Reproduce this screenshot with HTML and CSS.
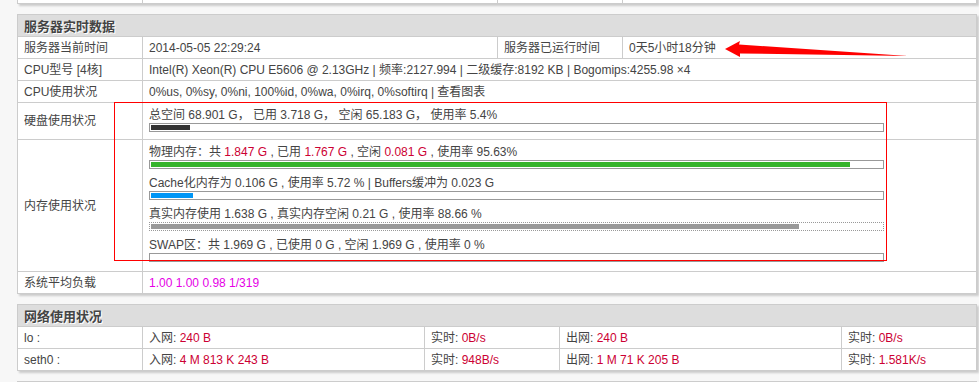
FILE: index.html
```html
<!DOCTYPE html>
<html>
<head>
    <meta charset="utf-8">
    <title>服务器实时数据</title>
    <link rel="stylesheet" href="styles.css">
</head>
<body>
    <div class="page">
        <!-- tail of the previous block -->
        <table class="info stub-top">
            <colgroup>
                <col class="c-label"><col class="c-value"><col class="c-label"><col>
            </colgroup>
            <tr>
                <td>&nbsp;</td>
                <td>&nbsp;</td>
                <td>&nbsp;</td>
                <td>&nbsp;</td>
            </tr>
        </table>

        <table class="info">
            <colgroup>
                <col class="c-label"><col class="c-value"><col class="c-label"><col>
            </colgroup>
            <tr><th colspan="4">服务器实时数据</th></tr>
            <tr>
                <td>服务器当前时间</td>
                <td>2014-05-05 22:29:24</td>
                <td>服务器已运行时间</td>
                <td>0天5小时18分钟</td>
            </tr>
            <tr>
                <td>CPU型号 [4核]</td>
                <td colspan="3">Intel(R) Xeon(R) CPU E5606 @ 2.13GHz | 频率:2127.994 | 二级缓存:8192 KB | Bogomips:4255.98 ×4</td>
            </tr>
            <tr>
                <td>CPU使用状况</td>
                <td colspan="3">0%us, 0%sy, 0%ni, 100%id, 0%wa, 0%irq, 0%softirq | 查看图表</td>
            </tr>
            <tr>
                <td>硬盘使用状况</td>
                <td colspan="3" class="bars">
                    <div class="line">总空间 68.901 G， 已用 3.718 G， 空闲 65.183 G， 使用率 5.4%</div>
                    <div class="bar"><div class="fill dark" style="width: 5.4%"></div></div>
                </td>
            </tr>
            <tr>
                <td>内存使用状况</td>
                <td colspan="3" class="bars mem">
                    <div class="line">物理内存：共 <span class="red">1.847 G</span> , 已用 <span class="red">1.767 G</span> , 空闲 <span class="red">0.081 G</span> , 使用率 95.63%</div>
                    <div class="bar"><div class="fill green" style="width: 95.63%"></div></div>
                    <div class="line">Cache化内存为 0.106 G , 使用率 5.72 % | Buffers缓冲为 0.023 G</div>
                    <div class="bar"><div class="fill blue" style="width: 5.72%"></div></div>
                    <div class="line">真实内存使用 1.638 G , 真实内存空闲 0.21 G , 使用率 88.66 %</div>
                    <div class="bar dotted"><div class="fill gray" style="width: 88.66%"></div></div>
                    <div class="line">SWAP区：共 1.969 G , 已使用 0 G , 空闲 1.969 G , 使用率 0 %</div>
                    <div class="bar"><div class="fill gray" style="width: 0%"></div></div>
                </td>
            </tr>
            <tr>
                <td>系统平均负载</td>
                <td colspan="3" class="load">1.00 1.00 0.98 1/319</td>
            </tr>
        </table>

        <table class="info">
            <colgroup>
                <col class="c-label"><col class="c-net"><col class="c-rate"><col class="c-net"><col>
            </colgroup>
            <tr><th colspan="5">网络使用状况</th></tr>
            <tr>
                <td>lo :</td>
                <td>入网: <span class="red">240 B</span></td>
                <td>实时: <span class="red">0B/s</span></td>
                <td>出网: <span class="red">240 B</span></td>
                <td>实时: <span class="red">0B/s</span></td>
            </tr>
            <tr>
                <td>seth0 :</td>
                <td>入网: <span class="red">4 M 813 K 243 B</span></td>
                <td>实时: <span class="red">948B/s</span></td>
                <td>出网: <span class="red">1 M 71 K 205 B</span></td>
                <td>实时: <span class="red">1.581K/s</span></td>
            </tr>
        </table>

        <!-- head of the next block -->
        <table class="info stub-bottom">
            <tr><th>&nbsp;</th></tr>
        </table>
    </div>

    <!-- annotation marks drawn over the screenshot -->
    <div class="mark-box"></div>
    <svg class="mark-arrow" width="200" height="24" viewBox="720 38 200 24">
        <polygon points="725,49 740,41 739,44.5 908,56 740,53.5 740,57" fill="#ff0000"/>
    </svg>
</body>
</html>
```

FILE: styles.css
```css
body {
    margin: 0;
    background-color: #f7f7f7;
    font-family: 'Liberation Sans', 'Noto Sans CJK SC', sans-serif;
    font-size: 12px;
    color: #444;
    position: relative;
    overflow: hidden;
    height: 382px;
}

.page {
    padding-left: 17px;
}

.info {
    width: 960px;
    border-collapse: collapse;
    background-color: #fff;
    box-shadow: 2px 2px 2px rgba(0, 0, 0, 0.18);
    margin-bottom: 10px;
    table-layout: fixed;
}

.info th,
.info td {
    border: 1px solid #ccc;
    height: 20px;
    padding: 1px 6px 0;
    text-align: left;
    vertical-align: middle;
    white-space: nowrap;
    line-height: 15px;
}

.info th {
    background-color: #ddd;
    font-size: 13px;
    font-weight: bold;
    color: #444;
    text-shadow: 1px 1px 0 #fff;
}

.stub-top {
    margin-top: -19px;
}

.c-label {
    width: 125px;
}

.c-value {
    width: 355px;
}

.c-net {
    width: 282px;
}

.c-rate {
    width: 135px;
}

.info .bars {
    padding-top: 4px;
    padding-bottom: 7px;
}

.info .mem {
    padding-bottom: 9px;
}

.bars .line {
    line-height: 16px;
}

.bar {
    width: 731px;
    height: 5px;
    padding: 1px;
    border: 1px solid #999;
    margin: 0 0 6px;
    background-color: #fff;
}

.bars .bar:last-child {
    margin-bottom: 0;
}

.bar.dotted {
    border-style: dotted;
}

.fill {
    height: 5px;
}

.dark {
    background-color: #333;
}

.green {
    background-color: #36b42c;
}

.blue {
    background-color: #0096f6;
}

.gray {
    background-color: #999;
}

.red {
    color: #cc0033;
}

.load {
    color: #e600e6;
}

/* annotations */
.mark-box {
    position: absolute;
    left: 114px;
    top: 102px;
    width: 771px;
    height: 157px;
    border: 1px solid #ff0000;
}

.mark-arrow {
    position: absolute;
    left: 720px;
    top: 38px;
}
```
